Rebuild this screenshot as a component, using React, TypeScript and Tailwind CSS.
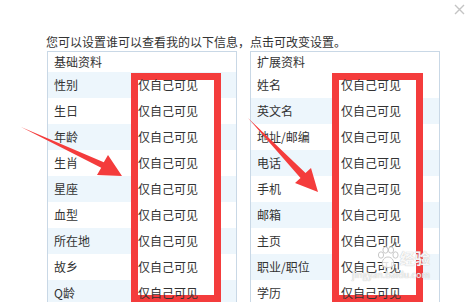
import React from 'react';

const basic = ['性别', '生日', '年龄', '生肖', '星座', '血型', '所在地', '故乡', 'Q龄'];
const extended = ['姓名', '英文名', '地址/邮编', '电话', '手机', '邮箱', '主页', '职业/职位', '学历'];

interface PanelProps {
  title: string;
  items: string[];
  blueFirst: boolean;
  boxLeft: string; // red box offset
}

const Panel: React.FC<PanelProps> = ({ title, items, blueFirst, boxLeft }) => {
  return (
    <div className="relative w-[190px] border border-[#c9d8e6] bg-white">
      <div className="h-[20px] leading-[20px] pl-[6px] text-[#333]">{title}</div>
      {items.map((label, i) => {
        const blue = blueFirst ? i % 2 === 0 : i % 2 === 1;
        return (
          <div
            key={label}
            className={`flex h-[26px] items-center ${blue ? 'bg-[#edf6fc]' : 'bg-white'}`}
          >
            <span className="w-[90px] pl-[6px] text-[#333]">{label}</span>
            <span className="relative z-10 text-[#333]">仅自己可见</span>
          </div>
        );
      })}
      {/* red highlight box */}
      <div className={`absolute top-[21px] h-[229px] border-[7px] border-[#f43c3c] bg-white ${boxLeft}`} />
    </div>
  );
};

export default function App() {
  return (
    <div
      className="relative h-[302px] w-[469px] overflow-hidden bg-white text-[12px]"
      style={{ fontFamily: '"Noto Sans CJK SC", "Noto Sans", sans-serif' }}
    >
      <div className="pl-[46px] pt-[34px]">
        <div className="h-[16px] leading-[16px] text-[#333]">
          您可以设置谁可以查看我的以下信息，点击可改变设置。
        </div>
        <div className="mt-[1px] flex gap-[13px] pl-[1px]">
          <Panel title="基础资料" items={basic} blueFirst boxLeft="left-[83px] w-[90px]" />
          <Panel title="扩展资料" items={extended} blueFirst={false} boxLeft="left-[81px] w-[91px]" />
        </div>
      </div>

      {/* close button */}
      <svg className="absolute left-[454px] top-[4px]" width="11" height="11" viewBox="0 0 11 11">
        <path d="M1 1 L10 10 M10 1 L1 10" stroke="#c4c4c4" strokeWidth="1.4" />
      </svg>

      {/* arrows */}
      <svg className="pointer-events-none absolute left-0 top-0 z-20" width="469" height="302">
        <polygon
          points="21,127 101.2,167.7 97,175 122,176 108,155 103.8,162.3"
          fill="#f43c3c"
        />
        <polygon
          points="248,118 300.5,177.9 295,183 318,192 311,168 305.5,173.1"
          fill="#f43c3c"
        />
      </svg>

      {/* watermark */}
      <div className="pointer-events-none absolute left-[352px] top-[246px] z-30 flex flex-col items-end">
        <div className="flex items-center gap-[1px]">
          <svg width="22" height="24" viewBox="0 0 22 24">
            <g fill="white" fillOpacity="0.85" stroke="#c8c8c8" strokeWidth="1">
              <ellipse cx="4" cy="9" rx="2.6" ry="3.2" />
              <ellipse cx="8.5" cy="4" rx="2.6" ry="3.2" />
              <ellipse cx="14" cy="4" rx="2.6" ry="3.2" />
              <ellipse cx="18.5" cy="9" rx="2.6" ry="3.2" />
              <path d="M11 11 C6 11 4 17 6 20 C8 22 14 22 16 20 C18 17 16 11 11 11 Z" />
            </g>
          </svg>
          <span className="text-[15px] font-bold leading-[18px] text-white/90 [text-shadow:0_0_1px_#aaa]">
            经验
          </span>
        </div>
        <span className="text-[9px] leading-[10px] text-white/90 [text-shadow:0_0_1px_#999]">
          jingyan.baidu.com
        </span>
      </div>
    </div>
  );
}
